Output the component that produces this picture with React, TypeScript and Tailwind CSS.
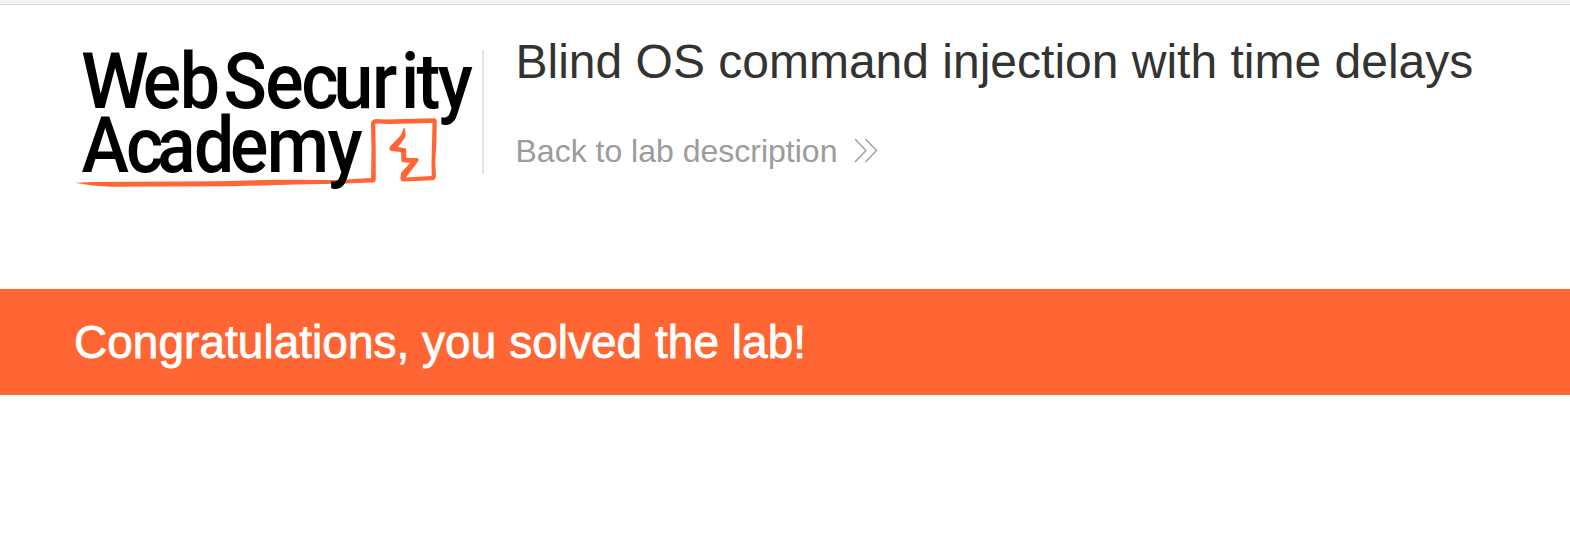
const LEFT = 70;
const SCALE = 0.93;
const securityX = [142.8, 179.8, 223.5, 265.2, 301.2, 333.5, 372, 401, 416.5, 437.7];
const academyX = [81.5, 126, 157, 194, 230, 266.7, 327.5];

const offsets = (xs: number[]) => xs.map((v) => ((v - LEFT) / SCALE).toFixed(2)).join(" ");

function Logo() {
  return (
    <svg className="-mt-[10px] block h-[150px] w-[412px] shrink-0 overflow-visible" viewBox="0 0 412 150">
      <path
        fill="#ff6633"
        d="M5 142.800 L24 142 L150 141.200 L205 139.800 L268 140 L301 138 L301.500 110 L301 84 Q301 79.500 306 79 L316 79.500 L364 78.300 Q367 78.500 366.800 82 L366.300 105 L365.300 122 L366 137 Q365.500 140 362 140.300 L334 141.500 Q330.500 141.500 330.500 138 L331 133 L340 122.700 L333 122.300 Q331 122 331.300 119 L331 112 L321 111 Q318 109.500 320.500 106 L331 95 L334 87.500 Q335.800 89 335.500 97 L328 107 L336 108.500 L336.500 118 L347 118 Q350 119 348 121.500 L336 137.500 L361.700 136 L361.500 122 L362 104 L362.500 83 L320 84 L305.300 83.500 L305.700 108 L305.800 140 Q305 143 302 142.500 L266 143.800 L225 144.500 L160 146.300 L40 146.700 L22 145.600 Z"
      />
      <g className="fill-black font-[Roboto,sans-serif] text-[77px] font-medium">
        <text x={11} y={67.5}>W</text>
        <text transform="scale(0.93 1)" x={offsets(securityX)} y={67.5}>ebSecurity</text>
        <text transform="scale(0.93 1)" x={offsets(academyX)} y={132.5}>Academy</text>
      </g>
    </svg>
  );
}

export default function App() {
  return (
    <div className="flex h-[550px] w-full flex-col overflow-hidden bg-white font-['Liberation_Sans',Arial,sans-serif]">
      <div className="h-[5px] shrink-0 border-b border-[#d8d8da] bg-[#f4f4f5]" />
      <header className="flex h-[284px] shrink-0 items-start pt-[45px] pl-[70px]">
        <Logo />
        <div className="h-[124px] w-[2px] shrink-0 bg-[#e5e5e5]" />
        <div className="-mt-[16px] flex flex-col pl-[31.5px] whitespace-nowrap">
          <h1 className="text-[48px] leading-[56px] text-[#333332]">Blind OS command injection with time delays</h1>
          <a className="mt-[43px] flex items-center text-[32px] leading-[36px] text-[#9c9c9c]">
            Back to lab description
            <svg className="-mt-px ml-[17px] h-[26px] w-[24px]" viewBox="0 0 24 26" fill="none" stroke="#9c9c9c" strokeWidth="1.3">
              <path d="M1 1 L12 12.500 L1 24 M11.500 1 L22.500 12.500 L11.500 24" />
            </svg>
          </a>
        </div>
      </header>
      <section className="flex h-[106px] shrink-0 items-center bg-[#ff6633] pl-[74px]">
        <h4 className="text-[46px] leading-[56px] tracking-[0.02px] whitespace-nowrap text-white [-webkit-text-stroke:0.8px_white]">
          Congratulations, you solved the lab!
        </h4>
      </section>
    </div>
  );
}
